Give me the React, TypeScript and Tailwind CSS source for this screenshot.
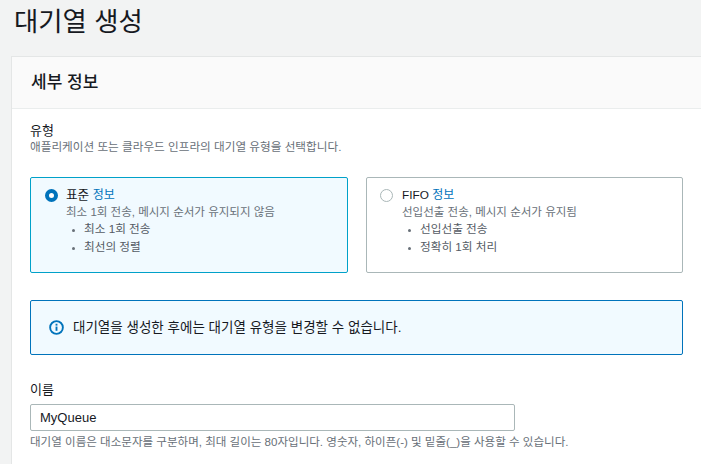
const font = { fontFamily: '"Liberation Sans", "Noto Sans CJK KR", sans-serif' };

function Option({ selected, title, desc, items }: { selected: boolean; title: string; desc: string; items: string[] }) {
  return (
    <div className={`flex h-[96px] flex-1 rounded-[2px] border pt-[8px] ${selected ? "border-[#00a1c9] bg-[#f1faff] pl-[14px]" : "border-[#aab7b8] bg-white pl-[13px]"}`}>
      <div className={`mt-[3px] shrink-0 ${selected ? "mr-[8px]" : "mr-[9px]"}`}>
        {selected ? (
          <div className="h-[13px] w-[13px] rounded-full border-[4px] border-[#0073bb] bg-white" />
        ) : (
          <div className="h-[13px] w-[13px] rounded-full border border-[#aab7b8] bg-white" />
        )}
      </div>
      <div>
        <div className={`leading-[18px] text-[#16191f] ${selected ? "text-[12.6px]" : "text-[11.8px]"}`}>
          {title} <span className="text-[12px] text-[#0073bb]">정보</span>
        </div>
        <div className="text-[11.53px] leading-[16px] text-[#687078]">{desc}</div>
        <ul className="ml-[18px] list-disc text-[11.65px] leading-[18px] text-[#545b64] marker:text-[9px] marker:text-[#687078]">
          {items.map((t) => (
            <li key={t}>{t}</li>
          ))}
        </ul>
      </div>
    </div>
  );
}

export default function App() {
  return (
    <div style={font} className="h-[464px] w-[701px] overflow-hidden bg-[#f2f3f3]">
      <h1 className="h-[56px] pl-[14px] pt-[3px] text-[26.4px] leading-[38px] font-normal text-[#16191f]">대기열 생성</h1>
      <div className="ml-[11px] h-[420px] w-[720px] border-l border-t border-[#e4e6e6] bg-white">
        <div className="flex h-[52px] items-center border-b border-[#eaeded] bg-[#fafafa] pl-[19px]">
          <h2 className="text-[17px] font-medium text-[#16191f]">세부 정보</h2>
        </div>
        <div className="pt-[13px] pl-[18px] w-[671px]">
          <div className="text-[13px] leading-[18px] text-[#16191f]">유형</div>
          <div className="text-[11.64px] leading-[14px] text-[#687078]">애플리케이션 또는 클라우드 인프라의 대기열 유형을 선택합니다.</div>
          <div className="mt-[23px] flex gap-[18px]">
            <Option selected title="표준" desc="최소 1회 전송, 메시지 순서가 유지되지 않음" items={["최소 1회 전송", "최선의 정렬"]} />
            <Option selected={false} title="FIFO" desc="선입선출 전송, 메시지 순서가 유지됨" items={["선입선출 전송", "정확히 1회 처리"]} />
          </div>
          <div className="mt-[27px] flex h-[55px] items-center rounded-[2px] border border-[#0073bb] bg-[#f1faff] pl-[18px]">
            <svg width="15" height="15" viewBox="0 0 16 16" className="mr-[9px] shrink-0">
              <circle cx="8" cy="8" r="6.8" fill="none" stroke="#0073bb" strokeWidth="2" />
              <rect x="7" y="7" width="2" height="4.5" fill="#0073bb" />
              <rect x="7" y="4" width="2" height="2" fill="#0073bb" />
            </svg>
            <span className="pt-[2px] text-[13.53px] text-[#16191f]">대기열을 생성한 후에는 대기열 유형을 변경할 수 없습니다.</span>
          </div>
          <div className="mt-[25px] text-[13px] leading-[19px] text-[#16191f]">이름</div>
          <input
            readOnly
            value="MyQueue"
            style={font}
            className="mt-[5px] block h-[27px] w-[485px] rounded-[2px] border border-[#aab7b8] bg-white pl-[9px] text-[13px] text-[#16191f] outline-none"
          />
          <div className="mt-[3px] text-[11.54px] leading-[16px] text-[#687078]">대기열 이름은 대소문자를 구분하며, 최대 길이는 80자입니다. 영숫자, 하이픈(-) 및 밑줄(_)을 사용할 수 있습니다.</div>
        </div>
      </div>
    </div>
  );
}
